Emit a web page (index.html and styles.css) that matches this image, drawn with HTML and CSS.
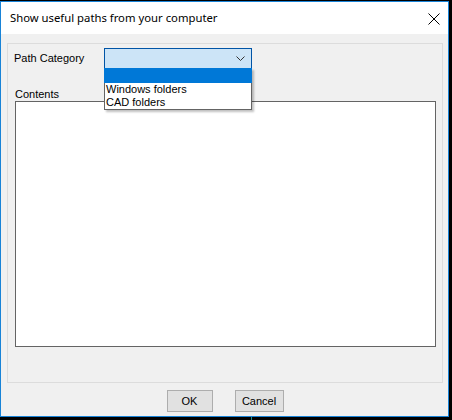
FILE: index.html
```html
<!DOCTYPE html>
<html>
<head>
<meta charset="utf-8">
<link rel="stylesheet" href="styles.css">
</head>
<body>
<div class="window">
  <div class="titlebar">
    <span class="title">Show useful paths from your computer</span>
    <svg class="close" width="12" height="12" viewBox="0 0 12 12"><path d="M0.5 0.5 L11.5 11.5 M11.5 0.5 L0.5 11.5" stroke="#000" stroke-width="1" fill="none"/></svg>
  </div>
  <div class="client">
    <div class="group">
      <div class="row">
        <span class="label">Path Category</span>
        <div class="combo">
          <svg class="chev" width="9" height="5" viewBox="0 0 9 5"><path d="M0.5 0.5 L4.5 4.5 L8.5 0.5" stroke="#333" stroke-width="1" fill="none"/></svg>
          <div class="dropdown">
            <div class="item selected"></div>
            <div class="item">Windows folders</div>
            <div class="item">CAD folders</div>
          </div>
        </div>
      </div>
      <div class="label contents-label">Contents</div>
      <div class="listbox"></div>
    </div>
    <div class="buttons">
      <button class="btn ok">OK</button>
      <button class="btn cancel">Cancel</button>
    </div>
  </div>
</div>
<div class="teal"></div>
</body>
</html>
```
FILE: styles.css
```css
html, body {
  margin: 0;
  padding: 0;
  background: #000;
  width: 452px;
  height: 420px;
  overflow: hidden;
}
body {
  font-family: "Liberation Sans", Arial, sans-serif;
  font-size: 11px;
  color: #000;
  position: relative;
}
.window {
  margin-top: 1px;
  width: 449px;
  height: 416px;
  box-sizing: border-box;
  border: 1px solid #1883d7;
  background: #f0f0f0;
  display: flex;
  flex-direction: column;
}
.titlebar {
  height: 32px;
  background: #fff;
  display: flex;
  align-items: center;
  padding-left: 9px;
  padding-right: 8px;
  flex-shrink: 0;
}
.title {
  font-family: "Noto Sans", "Open Sans", sans-serif;
  font-size: 11.3px;
  flex: 1;
  padding-bottom: 1px;
}
.close {
  margin-top: 1px;
}
.client {
  flex: 1;
  display: flex;
  flex-direction: column;
  padding: 9px 5px 0 6px;
}
.group {
  height: 340px;
  box-sizing: border-box;
  border: 1px solid #dcdcdc;
  padding: 4px 6px 0 7px;
  display: flex;
  flex-direction: column;
}
.row {
  display: flex;
  align-items: flex-start;
  height: 21px;
}
.label {
  line-height: 13px;
}
.row .label {
  width: 90px;
  margin-left: -1px;
  padding-top: 4px;
}
.combo {
  position: relative;
  width: 148px;
  height: 21px;
  box-sizing: border-box;
  border: 1px solid #0054a6;
  background: #cce4f7;
}
.chev {
  position: absolute;
  right: 6px;
  top: 7px;
}
.dropdown {
  position: absolute;
  left: -1px;
  top: 19px;
  width: 148px;
  box-sizing: border-box;
  border: 1px solid #646464;
  background: #fff;
  box-shadow: 2px 2px 2px rgba(0,0,0,0.25);
  z-index: 2;
}
.item {
  height: 13px;
  line-height: 13px;
  padding-left: 1px;
}
.item.selected {
  height: 15px;
  background: #0078d7;
  margin: -1px -1px 0 -1px;
}
.contents-label {
  margin-top: 19px;
}
.listbox {
  width: 421px;
  height: 246px;
  box-sizing: border-box;
  border: 1px solid #646464;
  background: #fff;
}
.buttons {
  display: flex;
  justify-content: center;
  gap: 22px;
  margin-top: 7px;
}
.btn {
  height: 22px;
  box-sizing: border-box;
  border: 1px solid #adadad;
  background: #e1e1e1;
  font-family: "Liberation Sans", Arial, sans-serif;
  font-size: 11px;
  color: #000;
  padding: 0;
  border-radius: 0;
}
.btn.ok { width: 46px; }
.btn.cancel { width: 49px; }
.teal {
  position: absolute;
  left: 251px;
  top: 417px;
  width: 1px;
  height: 3px;
  background: #1e8c8c;
}
```
